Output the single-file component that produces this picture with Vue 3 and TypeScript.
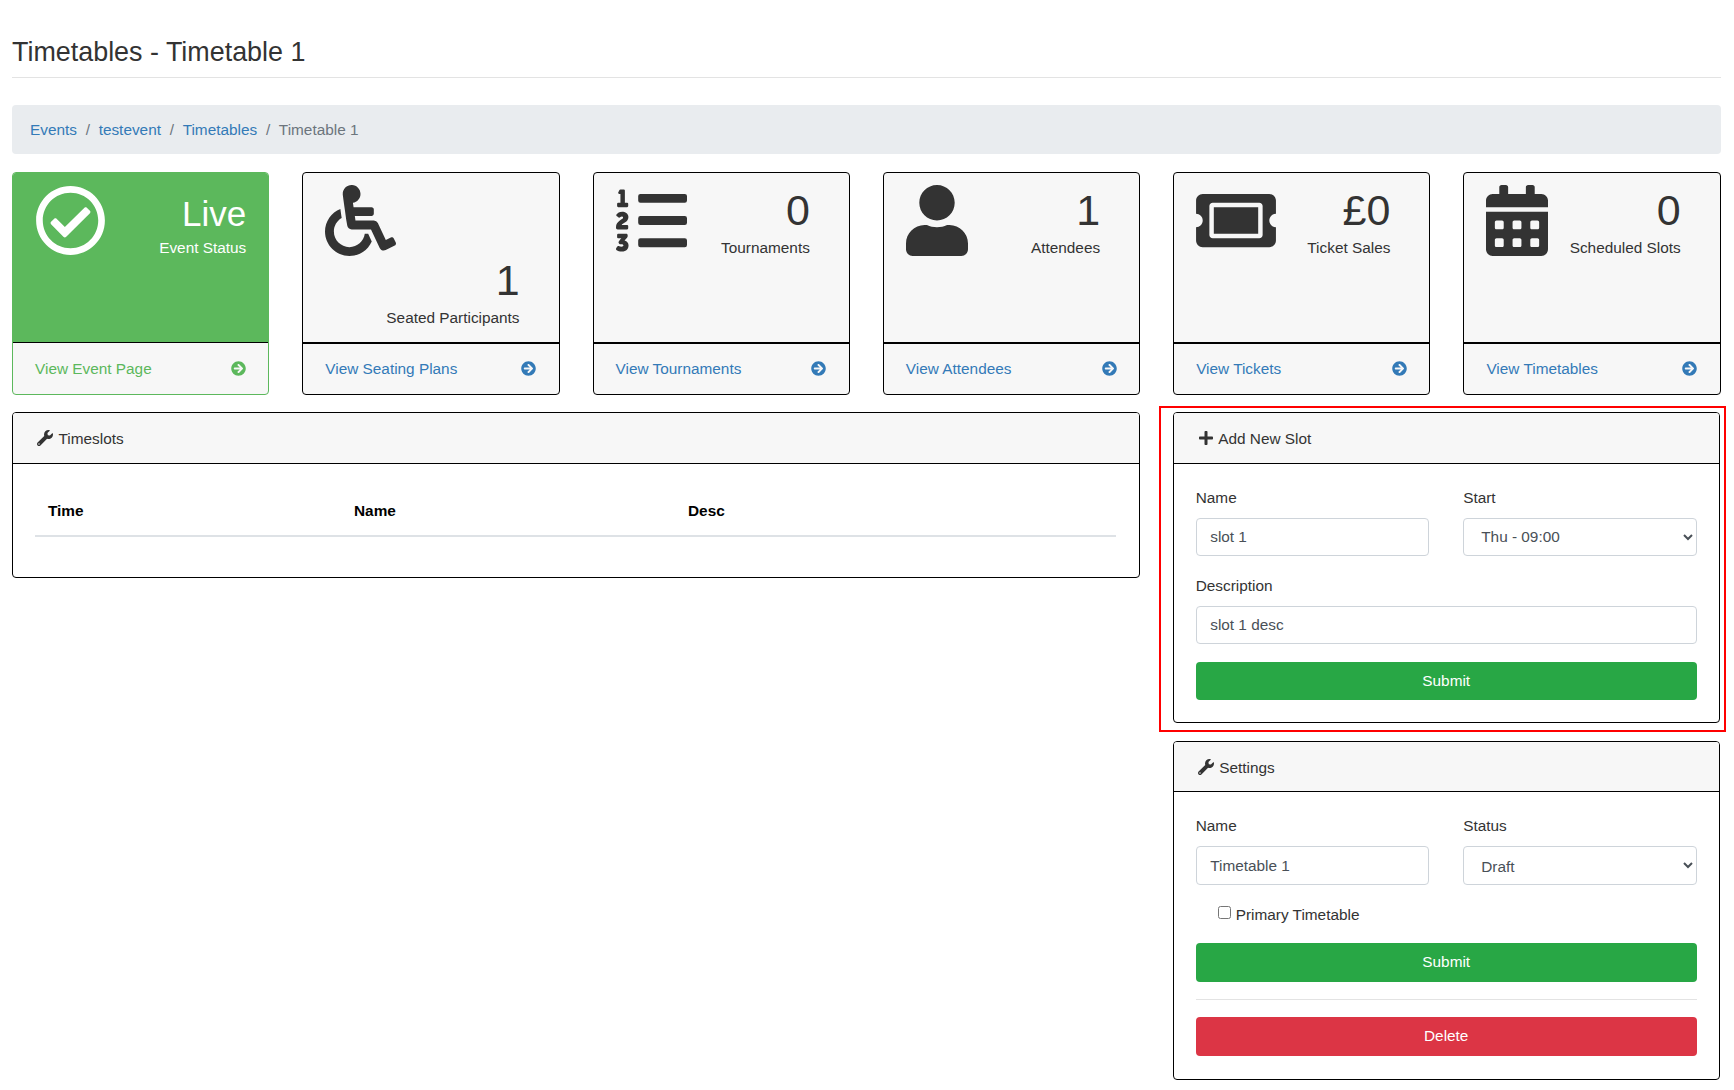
<script setup lang="ts">
interface StatCard {
  value: string;
  label: string;
  link: string;
  path: string;
  box: string;
  width: number;
  live?: boolean;
}

const checkCircle =
  'M256 8C119.033 8 8 119.033 8 256s111.033 248 248 248 248-111.033 248-248S392.967 8 256 8zm0 48c110.532 0 200 89.451 200 200 0 110.532-89.451 200-200 200-110.532 0-200-89.451-200-200 0-110.532 89.451-200 200-200m140.204 130.267l-22.536-22.718c-4.667-4.705-12.265-4.736-16.97-.068L215.346 303.697l-59.792-60.277c-4.667-4.705-12.265-4.736-16.97-.069l-22.719 22.536c-4.705 4.667-4.736 12.265-.068 16.971l90.781 91.516c4.667 4.705 12.265 4.736 16.97.068l172.589-171.204c4.704-4.668 4.734-12.266.067-16.971z';
const wheelchair =
  'M496.101 385.669l14.227 28.663c3.929 7.915.697 17.516-7.218 21.445l-65.465 32.886c-16.049 7.967-35.556 1.194-43.189-15.055L331.679 320H192c-15.925 0-29.426-11.71-31.679-27.475C126.433 55.308 128.38 70.044 128 64c0-36.358 30.318-65.635 67.052-63.929 33.271 1.545 60.048 28.905 60.925 62.201.868 32.933-23.152 60.423-54.608 65.039l4.67 32.69H336c8.837 0 16 7.163 16 16v32c0 8.837-7.163 16-16 16H215.182l4.572 32H352a32 32 0 0 1 28.962 18.392L438.477 396.8l36.178-18.349c7.915-3.929 17.517-.697 21.446 7.218zM311.358 352h-24.506c-7.788 54.204-54.528 96-110.852 96-61.757 0-112-50.243-112-112 0-41.505 22.694-77.809 56.324-97.156-3.712-25.965-6.844-47.86-9.488-66.333C45.956 198.464 0 261.963 0 336c0 97.047 78.953 176 176 176 71.87 0 133.806-43.308 161.11-105.192L311.358 352z';
const listOl =
  'M61.77 401l17.5-20.15a19.92 19.92 0 0 0 5.07-14.19v-3.31C84.34 356 80.5 352 73 352H16a8 8 0 0 0-8 8v16a8 8 0 0 0 8 8h22.83a157.41 157.41 0 0 0-11 12.31l-5.61 7c-4 5.07-5.25 10.13-2.8 14.88l1.05 1.93c3 5.76 6.29 7.88 12.25 7.88h4.73c10.33 0 15.94 2.44 15.94 9.09 0 4.72-4.2 8.22-14.36 8.22a41.54 41.54 0 0 1-15.47-3.12c-6.49-3.88-11.74-3.5-15.6 3.12l-5.59 9.31c-3.72 6.13-3.19 11.72 2.63 15.94 7.71 4.69 20.38 9.44 37 9.44 34.16 0 48.5-22.75 48.5-44.12-.03-14.38-9.12-29.76-28.73-34.88zM496 224H176a16 16 0 0 0-16 16v32a16 16 0 0 0 16 16h320a16 16 0 0 0 16-16v-32a16 16 0 0 0-16-16zm0-160H176a16 16 0 0 0-16 16v32a16 16 0 0 0 16 16h320a16 16 0 0 0 16-16V80a16 16 0 0 0-16-16zm0 320H176a16 16 0 0 0-16 16v32a16 16 0 0 0 16 16h320a16 16 0 0 0 16-16v-32a16 16 0 0 0-16-16zM16 160h64a8 8 0 0 0 8-8v-16a8 8 0 0 0-8-8H64V40a8 8 0 0 0-8-8H32a8 8 0 0 0-7.14 4.42l-8 16A8 8 0 0 0 24 64h8v64H16a8 8 0 0 0-8 8v16a8 8 0 0 0 8 8zm-3.91 160H80a8 8 0 0 0 8-8v-16a8 8 0 0 0-8-8H41.32c3.29-10.29 48.34-18.68 48.34-56.44 0-29.06-25-39.56-44.47-39.56-21.36 0-33.8 10-40.46 18.75-4.37 5.59-3 10.84 2.8 15.37l8.58 6.88c5.61 4.56 11 2.47 16.12-2.44a13.44 13.44 0 0 1 9.46-3.84c3.33 0 9.28 1.56 9.28 8.75C51 248.19 0 257.31 0 304.59v4C0 316 5.08 320 12.09 320z';
const user =
  'M224 256c70.7 0 128-57.3 128-128S294.7 0 224 0 96 57.3 96 128s57.3 128 128 128zm89.6 32h-16.7c-22.2 10.2-46.9 16-72.9 16s-50.6-5.8-72.9-16h-16.7C60.2 288 0 348.2 0 422.4V464c0 26.5 21.5 48 48 48h352c26.5 0 48-21.5 48-48v-41.6c0-74.2-60.2-134.4-134.4-134.4z';
const ticket =
  'M128 160h320v192H128V160zm400 96c0 26.51 21.49 48 48 48v96c0 26.51-21.49 48-48 48H48c-26.51 0-48-21.49-48-48v-96c26.51 0 48-21.49 48-48s-21.49-48-48-48v-96c0-26.51 21.49-48 48-48h480c26.51 0 48 21.49 48 48v96c-26.51 0-48 21.49-48 48zm-48-104c0-13.255-10.745-24-24-24H120c-13.255 0-24 10.745-24 24v208c0 13.255 10.745 24 24 24h336c13.255 0 24-10.745 24-24V152z';
const calendar =
  'M0 464c0 26.5 21.5 48 48 48h352c26.5 0 48-21.5 48-48V192H0v272zm320-196c0-6.6 5.4-12 12-12h40c6.6 0 12 5.4 12 12v40c0 6.6-5.4 12-12 12h-40c-6.6 0-12-5.4-12-12v-40zm0 128c0-6.6 5.4-12 12-12h40c6.6 0 12 5.4 12 12v40c0 6.6-5.4 12-12 12h-40c-6.6 0-12-5.4-12-12v-40zM192 268c0-6.6 5.4-12 12-12h40c6.6 0 12 5.4 12 12v40c0 6.6-5.4 12-12 12h-40c-6.6 0-12-5.4-12-12v-40zm0 128c0-6.6 5.4-12 12-12h40c6.6 0 12 5.4 12 12v40c0 6.6-5.4 12-12 12h-40c-6.6 0-12-5.4-12-12v-40zM64 268c0-6.6 5.4-12 12-12h40c6.6 0 12 5.4 12 12v40c0 6.6-5.4 12-12 12H76c-6.6 0-12-5.4-12-12v-40zm0 128c0-6.6 5.4-12 12-12h40c6.6 0 12 5.4 12 12v40c0 6.6-5.4 12-12 12H76c-6.6 0-12-5.4-12-12v-40zM400 64h-48V16c0-8.8-7.2-16-16-16h-32c-8.8 0-16 7.2-16 16v48H160V16c0-8.8-7.2-16-16-16h-32c-8.8 0-16 7.2-16 16v48H48C21.5 64 0 85.5 0 112v48h448v-48c0-26.5-21.5-48-48-48z';
const arrow =
  'M256 8c137 0 248 111 248 248S393 504 256 504 8 393 8 256 119 8 256 8zm-28.9 143.6l75.5 72.4H120c-13.3 0-24 10.7-24 24v16c0 13.3 10.7 24 24 24h182.6l-75.5 72.4c-9.7 9.3-9.9 24.8-.4 34.3l11 10.9c9.4 9.4 24.6 9.4 33.9 0L404.3 273c9.4-9.4 9.4-24.6 0-33.9L271.6 106.3c-9.4-9.4-24.6-9.4-33.9 0l-11 10.9c-9.3 9.6-9.1 25.1.4 34.4z';
const wrench =
  'M507.73 109.1c-2.24-9.03-13.54-12.09-20.12-5.51l-74.36 74.36-67.88-11.31-11.31-67.88 74.36-74.36c6.62-6.62 3.43-17.9-5.66-20.16-47.38-11.74-99.55.91-136.58 37.93-39.64 39.64-50.55 97.1-34.05 147.2L18.74 402.76c-24.99 24.99-24.99 65.51 0 90.5 24.99 24.99 65.51 24.99 90.5 0l213.21-213.21c50.12 16.71 107.47 5.68 147.37-34.22 37.07-37.07 49.7-89.32 37.91-136.73zM64 472c-13.25 0-24-10.75-24-24 0-13.26 10.75-24 24-24s24 10.74 24 24c0 13.25-10.75 24-24 24z';
const plus =
  'M416 208H272V64c0-17.67-14.33-32-32-32h-32c-17.67 0-32 14.33-32 32v144H32c-17.67 0-32 14.33-32 32v32c0 17.67 14.33 32 32 32h144v144c0 17.67 14.33 32 32 32h32c17.67 0 32-14.33 32-32V304h144c17.67 0 32-14.33 32-32v-32c0-17.67-14.33-32-32-32z';

const cards: StatCard[] = [
  { value: 'Live', label: 'Event Status', link: 'View Event Page', path: checkCircle, box: '0 0 512 512', width: 71, live: true },
  { value: '1', label: 'Seated Participants', link: 'View Seating Plans', path: wheelchair, box: '0 0 512 512', width: 71 },
  { value: '0', label: 'Tournaments', link: 'View Tournaments', path: listOl, box: '0 0 512 512', width: 71 },
  { value: '1', label: 'Attendees', link: 'View Attendees', path: user, box: '0 0 448 512', width: 62 },
  { value: '£0', label: 'Ticket Sales', link: 'View Tickets', path: ticket, box: '0 0 576 512', width: 80 },
  { value: '0', label: 'Scheduled Slots', link: 'View Timetables', path: calendar, box: '0 0 448 512', width: 62 },
];

const crumbs = ['Events', 'testevent', 'Timetables'];
</script>

<template>
  <div class="page">
    <h1 class="title">Timetables - Timetable 1</h1>

    <nav class="breadcrumb">
      <template v-for="crumb in crumbs" :key="crumb">
        <a href="#">{{ crumb }}</a>
        <span class="sep">/</span>
      </template>
      <span class="current">Timetable 1</span>
    </nav>

    <div class="cards">
      <div v-for="card in cards" :key="card.link" class="card" :class="{ live: card.live }">
        <div class="card-head">
          <svg class="card-icon" :viewBox="card.box" :width="card.width" height="71">
            <path :d="card.path" fill="currentColor" />
          </svg>
          <div class="card-text">
            <div class="card-value">{{ card.value }}</div>
            <div>{{ card.label }}</div>
          </div>
        </div>
        <a href="#" class="card-foot">
          <span class="foot-text">{{ card.link }}</span>
          <svg viewBox="0 0 512 512" width="15" height="15"><path :d="arrow" fill="currentColor" /></svg>
        </a>
      </div>
    </div>

    <div class="lower">
      <section class="panel">
        <header class="panel-head">
          <svg viewBox="0 0 512 512" width="16" height="16"><path :d="wrench" fill="currentColor" /></svg>
          Timeslots
        </header>
        <div class="panel-body table-body">
          <table>
            <thead>
              <tr>
                <th class="col-time">Time</th>
                <th class="col-name">Name</th>
                <th>Desc</th>
              </tr>
            </thead>
          </table>
        </div>
      </section>

      <div class="side">
        <section class="panel highlighted">
          <header class="panel-head">
            <svg class="plus-icon" viewBox="0 0 448 512" width="14" height="16"><path :d="plus" fill="currentColor" /></svg>
            Add New Slot
          </header>
          <div class="panel-body slot-form">
            <div class="form-row">
              <div>
                <label>Name</label>
                <input class="control" type="text" value="slot 1" />
              </div>
              <div>
                <label>Start</label>
                <select class="control">
                  <option>Thu - 09:00</option>
                </select>
              </div>
            </div>
            <div class="group">
              <label>Description</label>
              <input class="control" type="text" value="slot 1 desc" />
            </div>
            <button class="btn green">Submit</button>
          </div>
        </section>

        <section class="panel">
          <header class="panel-head compact">
            <svg viewBox="0 0 512 512" width="16" height="16"><path :d="wrench" fill="currentColor" /></svg>
            Settings
          </header>
          <div class="panel-body settings-form">
            <div class="form-row">
              <div>
                <label>Name</label>
                <input class="control" type="text" value="Timetable 1" />
              </div>
              <div>
                <label>Status</label>
                <select class="control draft">
                  <option>Draft</option>
                </select>
              </div>
            </div>
            <label class="check">
              <input type="checkbox" />
              Primary Timetable
            </label>
            <button class="btn green">Submit</button>
            <hr />
            <button class="btn red">Delete</button>
          </div>
        </section>
      </div>
    </div>
  </div>
</template>

<style>
body {
  background: #fff;
}
</style>

<style scoped>
.page {
  padding: 36px 13.3px 0 12px;
  font-family: "Liberation Sans", Arial, sans-serif;
  font-size: 15.36px;
  line-height: 22.8px;
  color: #333;
}

a {
  color: #337ab7;
  text-decoration: none;
}

.title {
  margin: 0;
  padding-bottom: 9px;
  border-bottom: 1px solid #e3e3e3;
  font-size: 26.9px;
  line-height: 32px;
  font-weight: 400;
}

.breadcrumb {
  display: flex;
  align-items: center;
  box-sizing: border-box;
  height: 49px;
  margin-top: 27px;
  padding: 2px 18px 0;
  background: #e9ecef;
  border-radius: 4px;
}

.sep {
  padding: 0 8.7px;
  color: #6c757d;
}

.current {
  color: #6c757d;
}

.cards {
  display: grid;
  grid-template-columns: repeat(6, 1fr);
  gap: 33px;
  margin-top: 18px;
}

.card {
  display: flex;
  flex-direction: column;
  border: 1px solid #000;
  border-radius: 4px;
  background: #f7f7f7;
  overflow: hidden;
}

.card-head {
  flex: 1;
  display: flex;
  flex-wrap: wrap;
  align-items: flex-start;
  padding: 12px 39px 12px 22px;
  color: #333;
}

.card-icon {
  display: block;
  margin-bottom: -1px;
}

.card-text {
  margin-left: auto;
  text-align: right;
}

.card-value {
  margin-bottom: 2px;
  font-size: 43px;
  line-height: 50px;
}

.card-foot {
  display: flex;
  align-items: center;
  justify-content: space-between;
  height: 50px;
  padding: 0 22.5px 0 22px;
  border-top: 2px solid #000;
}

.foot-text {
  margin-top: 2px;
}

.card.live {
  border-color: #5cb85c;
}

.card.live .card-head {
  background: #5cb85c;
  color: #fff;
  padding-right: 22px;
}

.card.live .card-value {
  padding-top: 6px;
  margin-bottom: 0;
  font-size: 35px;
  line-height: 46px;
}

.card.live .card-foot {
  color: #5cb85c;
  border-top-width: 1px;
  height: 51px;
}

.lower {
  display: grid;
  grid-template-columns: 1fr 547px;
  gap: 33px;
  align-items: start;
  margin-top: 17px;
  padding-right: 1px;
}

.side {
  display: flex;
  flex-direction: column;
  gap: 18px;
}

.panel {
  border: 1px solid #000;
  border-radius: 4px;
}

.highlighted {
  position: relative;
}

.highlighted::after {
  content: "";
  position: absolute;
  top: -7px;
  left: -15px;
  right: -7px;
  bottom: -10px;
  border: 2px solid #f00;
  pointer-events: none;
}

.panel-head {
  display: flex;
  align-items: center;
  gap: 5.5px;
  box-sizing: border-box;
  height: 51px;
  padding: 3px 24px 0;
  background: #f7f7f7;
  border-bottom: 1px solid #000;
  border-radius: 3px 3px 0 0;
}

.panel-head svg {
  margin-top: -3px;
}

.panel-head .plus-icon {
  margin-left: 1px;
}

.panel-head.compact {
  height: 50px;
}

.panel-body {
  padding: 23px 22px 22px;
}

.table-body {
  padding: 24px 23px 40px 22px;
}

table {
  width: 100%;
  border-collapse: collapse;
  table-layout: fixed;
}

th {
  box-sizing: border-box;
  padding: 12px 13px;
  text-align: left;
  color: #000;
  border-bottom: 2px solid #dee2e6;
}

.col-time {
  width: 306px;
}

.col-name {
  width: 334px;
}

label {
  display: block;
  margin-bottom: 8px;
}

.form-row {
  display: grid;
  grid-template-columns: 1fr 1fr;
  gap: 34px;
  margin-bottom: 19px;
}

.group label {
  margin-bottom: 9px;
}

.settings-form {
  padding-bottom: 23px;
}

.group {
  margin-bottom: 18px;
}

.control {
  display: block;
  box-sizing: border-box;
  width: 100%;
  height: 38.8px;
  padding: 0 13.5px;
  border: 1px solid #ced4da;
  border-radius: 4px;
  background: #fff;
  color: #495057;
  font: inherit;
}

.slot-form .control {
  height: 38px;
}

select.control {
  padding: 0 13px;
}

select.draft {
  padding-top: 2px;
}

.check {
  display: flex;
  align-items: center;
  gap: 5px;
  height: 23px;
  margin: 0 0 16px 22px;
}

.check input {
  width: 13px;
  height: 13px;
  margin: 0 0 5px;
}

.btn {
  display: block;
  width: 100%;
  height: 38.8px;
  border: none;
  border-radius: 4px;
  color: #fff;
  font: inherit;
}

.slot-form .btn {
  height: 38px;
}

.green {
  background: #28a745;
}

.red {
  background: #dc3545;
}

hr {
  margin: 17px 0;
  border: none;
  border-top: 1px solid #e3e3e3;
}
</style>
